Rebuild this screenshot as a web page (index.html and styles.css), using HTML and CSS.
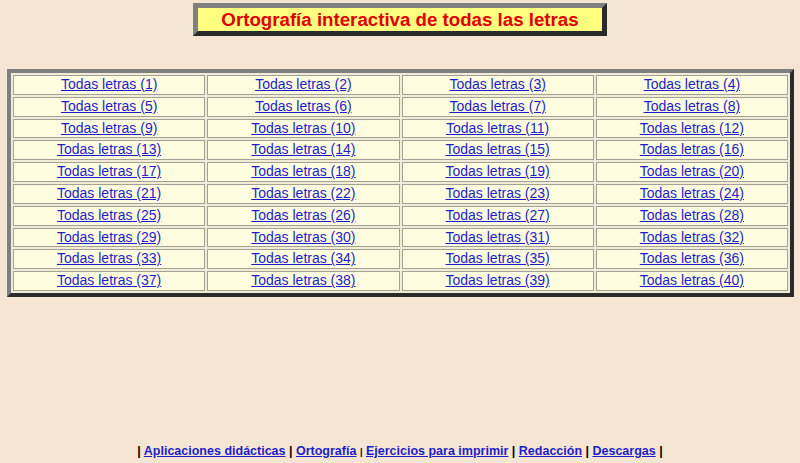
FILE: index.html
```html
<!DOCTYPE html>
<html lang="es">
<head>
<meta charset="utf-8">
<title>Ortografía interactiva de todas las letras</title>
<link rel="stylesheet" href="styles.css">
</head>
<body>
<div class="title-wrap">
  <h1 class="title">Ortografía interactiva de todas las letras</h1>
</div>
<table class="grid">
  <tbody id="rows"></tbody>
</table>
<p class="footer">| <a href="#">Aplicaciones didácticas</a> | <a href="#">Ortografía</a> <span class="small">|</span> <a href="#">Ejercicios para imprimir</a> | <a href="#">Redacción</a> | <a href="#">Descargas</a> |</p>
<script src="script.js"></script>
</body>
</html>
```
FILE: script.js
```js
var tb = document.getElementById('rows');
var n = 1;
for (var r = 0; r < 10; r++) {
  var tr = document.createElement('tr');
  for (var c = 0; c < 4; c++) {
    var td = document.createElement('td');
    var a = document.createElement('a');
    a.href = '#';
    a.textContent = 'Todas letras (' + n + ')';
    n++;
    td.appendChild(a);
    tr.appendChild(td);
  }
  tb.appendChild(tr);
}
```
FILE: styles.css
```css
html, body {
  margin: 0;
  padding: 0;
}
body {
  background: #f5e6d3;
  font-family: "Liberation Sans", Arial, sans-serif;
  height: 463px;
  overflow: hidden;
}
.title-wrap {
  display: flex;
  justify-content: center;
  padding-top: 3px;
}
.title {
  margin: 0;
  width: 404px;
  height: 23px;
  background: #ffff80;
  border: 5px solid;
  border-color: #808080 #2a2a2a #2a2a2a #808080;
  color: #e00000;
  font-size: 18.7px;
  font-weight: bold;
  line-height: 23px;
  text-align: center;
}
.grid {
  margin: 33px 6px 0 7px;
  width: 787px;
  border: 4px solid;
  border-color: #7f7f7f #2b2b2b #2b2b2b #7f7f7f;
  border-collapse: separate;
  border-spacing: 2px;
  background: #f1ecd6;
  table-layout: fixed;
}
.grid td {
  border: 1px solid #a3a196;
  background: #fffde0;
  text-align: center;
  font-size: 14px;
  line-height: 17.8px;
  padding: 0;
}
a {
  color: #1e1ec8;
  text-decoration: underline;
}
.footer {
  margin: 146px 0 0;
  text-align: center;
  font-size: 12.5px;
  font-weight: bold;
  line-height: 16px;
  color: #000;
}
.small {
  font-size: 9px;
}
```
